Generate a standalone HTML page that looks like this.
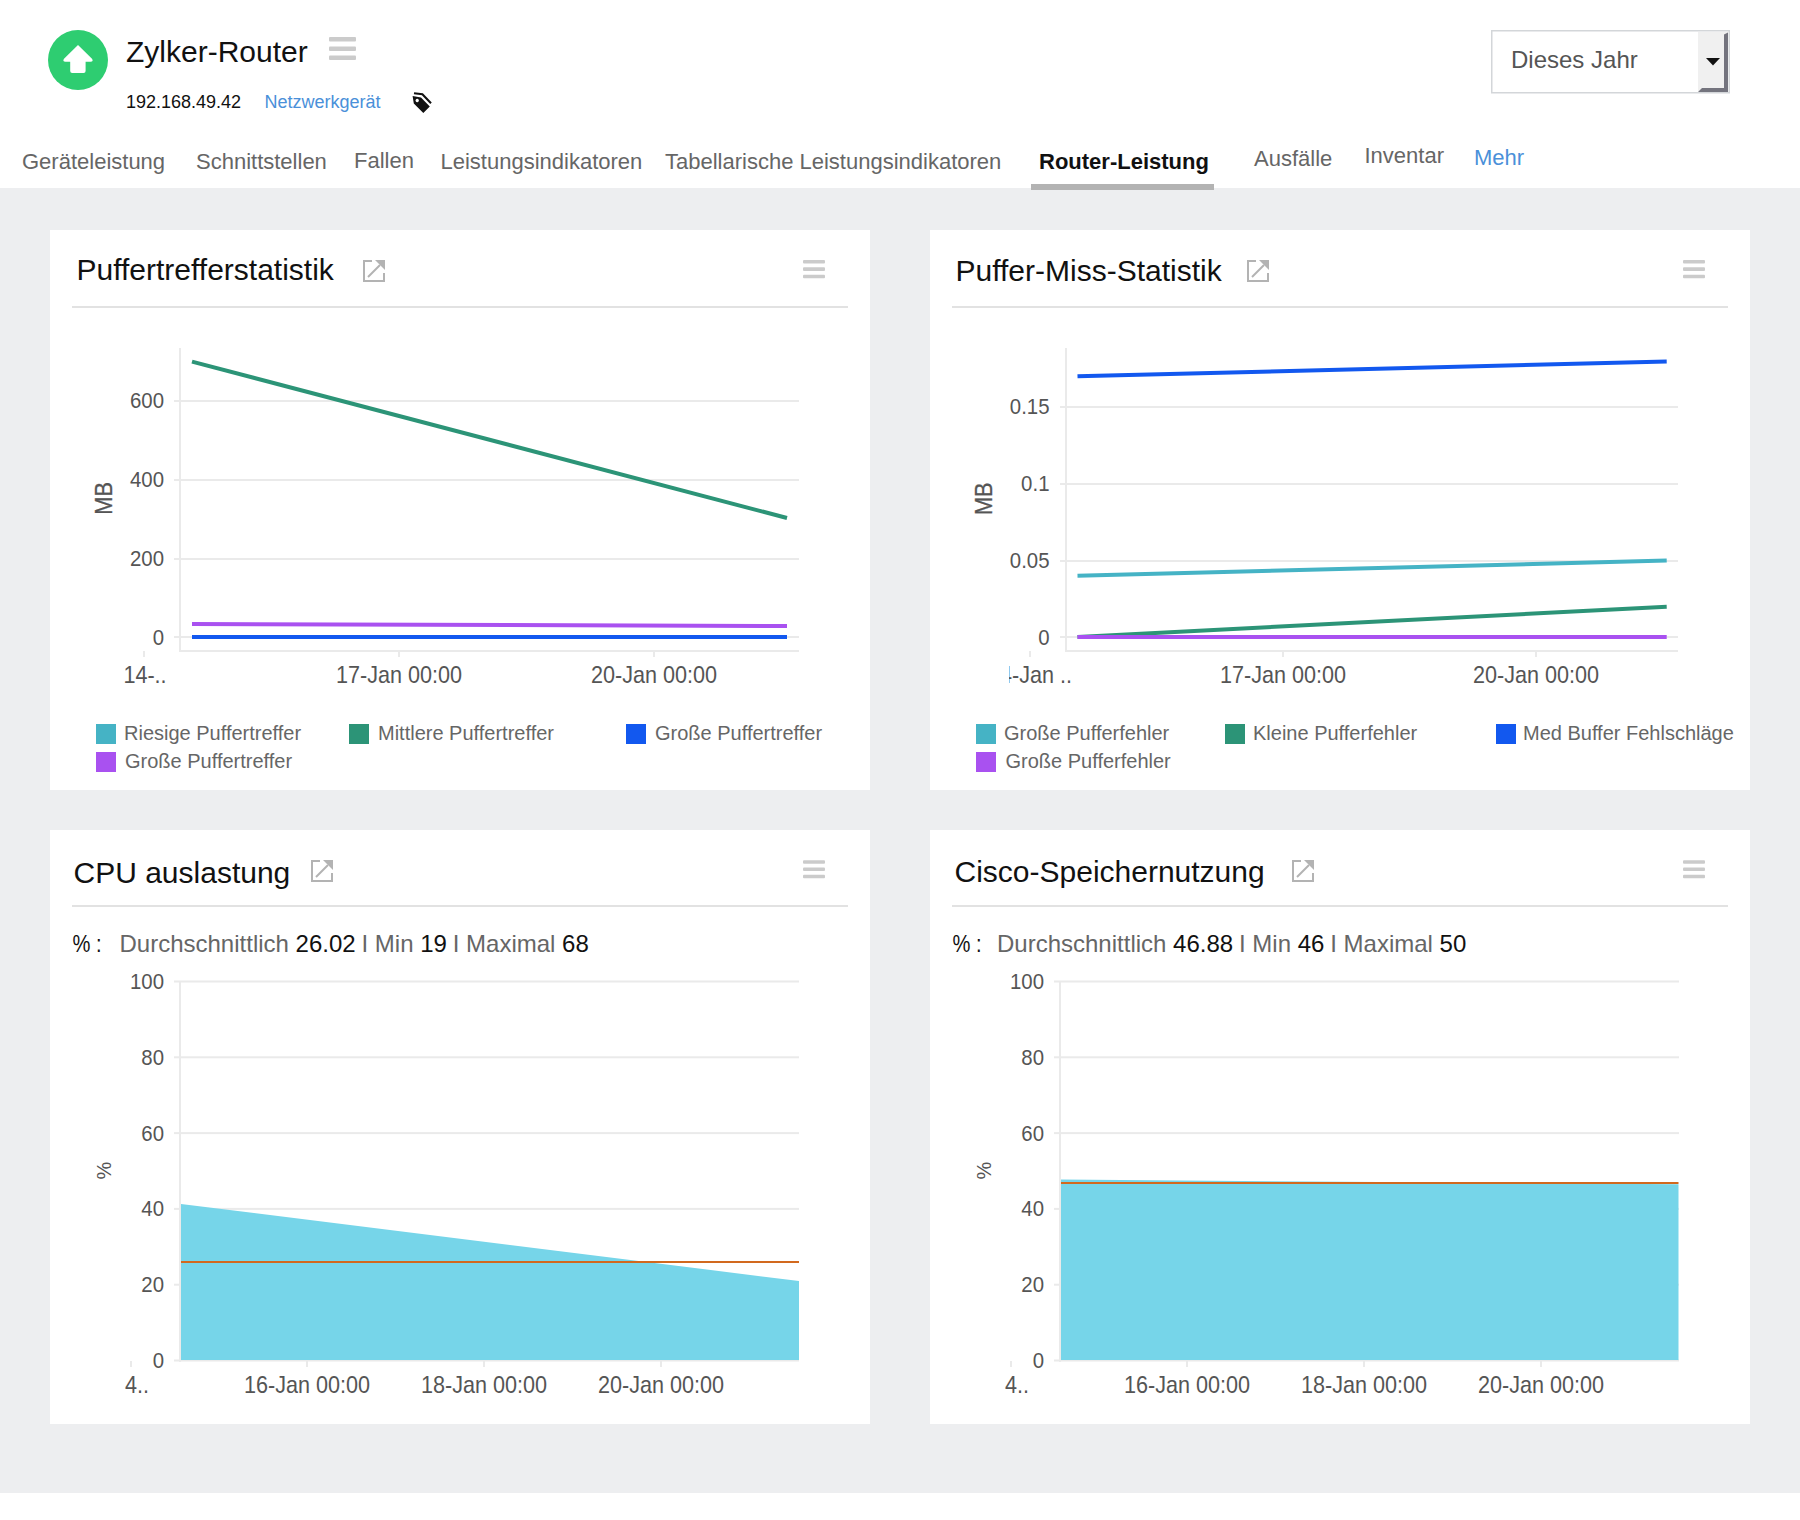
<!DOCTYPE html>
<html><head><meta charset="utf-8">
<style>
html,body{margin:0;padding:0;background:#fff;}
body{width:1800px;height:1520px;overflow:hidden;position:relative;font-family:"Liberation Sans",sans-serif;}
svg{position:absolute;left:0;top:0;}
text{font-family:"Liberation Sans",sans-serif;}
</style></head>
<body>
<svg width="1800" height="1520" viewBox="0 0 1800 1520">
<!-- header -->
<rect x="0" y="0" width="1800" height="188" fill="#fff"/>
<rect x="0" y="188" width="1800" height="1305" fill="#edeef0"/>

<circle cx="78" cy="60" r="30" fill="#2ecd71"/>
<path d="M78 45 L92 58.8 Q93.8 61.8 90.5 61.8 L85.6 61.8 L85.6 71 Q85.6 73 83.6 73 L72.2 73 Q70.2 73 70.2 71 L70.2 61.8 L65.5 61.8 Q62.2 61.8 64 58.8 Z" fill="#fff"/>

<text x="126" y="62" font-size="30" fill="#111">Zylker-Router</text>
<g fill="#cbcbcb">
<rect x="329" y="37" width="27" height="4.5" rx="1"/>
<rect x="329" y="46.5" width="27" height="4.5" rx="1"/>
<rect x="329" y="55.5" width="27" height="4.5" rx="1"/>
</g>
<text x="126" y="108" font-size="18" fill="#111">192.168.49.42</text>
<text x="264.5" y="108" font-size="18" fill="#4a90d9">Netzwerkgerät</text>
<!-- tag icon -->
<path d="M412.6 96.1 L421 97.4 L429.8 106.4 L423.3 112.9 L413.8 103.5 Z M417.2 98.8 A1.7 1.7 0 1 0 417.21 98.8 Z" fill="#111" fill-rule="evenodd"/>
<path d="M414 93.3 L422.4 94.3 L431 103.2" fill="none" stroke="#111" stroke-width="2.1"/>
<!-- dropdown -->
<rect x="1491.75" y="30.75" width="237.5" height="62" fill="#fff" stroke="#d3d6d9" stroke-width="1.5"/>
<rect x="1698" y="32" width="30" height="59" fill="#f0f0f0"/>
<path d="M1724 34.5 L1728 32.5 L1728 92 L1698 92 L1702 88 L1724 88 Z" fill="#74747e"/>
<path d="M1706 58 L1720 58 L1713 65.5 Z" fill="#111"/>
<text x="1511" y="68" font-size="24" fill="#555">Dieses Jahr</text>

<!-- tabs -->
<g font-size="22" fill="#666">
<text x="22" y="169">Geräteleistung</text>
<text x="196" y="169">Schnittstellen</text>
<text x="354" y="168">Fallen</text>
<text x="440.5" y="169">Leistungsindikatoren</text>
<text x="665" y="169">Tabellarische Leistungsindikatoren</text>
<text x="1254" y="166">Ausfälle</text>
<text x="1364.5" y="162.5">Inventar</text>
<text x="1474" y="165" fill="#4a90d9">Mehr</text>
</g>
<text x="1039" y="169" font-size="22" font-weight="bold" fill="#111">Router-Leistung</text>
<rect x="1031" y="184" width="183" height="6" fill="#b3b3b3"/>

<!-- cards -->
<rect x="50" y="230" width="820" height="560" fill="#fff"/>
<rect x="930" y="230" width="820" height="560" fill="#fff"/>
<rect x="50" y="830" width="820" height="594" fill="#fff"/>
<rect x="930" y="830" width="820" height="594" fill="#fff"/>

<!-- CARD1_START -->
<text x="76.5" y="280" font-size="30" fill="#111">Puffertrefferstatistik</text>
<g id="exp1" fill="none" stroke="#b3b3b3" stroke-width="2">
<path d="M372 261 L364 261 L364 281 L384 281 L384 273"/>
<path d="M368 277 L380 265"/>
<path d="M375 260 L385 260 L385 270 Z" fill="#b3b3b3" stroke="none"/>
</g>
<g fill="#cbcbcb">
<rect x="803" y="260" width="22" height="3.6" rx="1"/>
<rect x="803" y="267.3" width="22" height="3.6" rx="1"/>
<rect x="803" y="274.7" width="22" height="3.6" rx="1"/>
</g>
<rect x="72" y="306" width="776" height="2" fill="#e2e2e2"/>
<!-- chart1 -->
<g fill="#eaeaea">
<rect x="174" y="400" width="625" height="2"/>
<rect x="174" y="479" width="625" height="2"/>
<rect x="174" y="558" width="625" height="2"/>
<rect x="174" y="636" width="625" height="2"/>
<rect x="179" y="348" width="2" height="304"/>
<rect x="179" y="650" width="620" height="2"/>
<rect x="143" y="651" width="2" height="6"/>
<rect x="398" y="651" width="2" height="6"/>
<rect x="653" y="651" width="2" height="6"/>
</g>
<text transform="translate(112.2,498.3) rotate(-90) scale(0.95,1)" font-size="23" fill="#555" stroke="#555" stroke-width="0.3" text-anchor="middle">MB</text>
<g fill="none" stroke-width="4" stroke-linecap="butt">
<path d="M192 637 L787 637" stroke="#45b3c5"/>
<path d="M192 361.6 L787 518" stroke="#2c9477"/>
<path d="M192 624 L787 626" stroke="#a951f0"/>
<path d="M192 637 L787 637" stroke="#1258ef"/>
</g>
<g>
<rect x="96" y="724" width="20" height="20" fill="#45b3c5"/>
<rect x="349" y="724" width="20" height="20" fill="#2c9477"/>
<rect x="626" y="724" width="20" height="20" fill="#1258ef"/>
<rect x="96" y="752" width="20" height="20" fill="#a951f0"/>
</g>
<g font-size="20" fill="#666">
<text x="124" y="740">Riesige Puffertreffer</text>
<text x="378" y="740">Mittlere Puffertreffer</text>
<text x="655" y="740">Große Puffertreffer</text>
<text x="125" y="768">Große Puffertreffer</text>
</g>
<g font-size="24" fill="#555" text-anchor="middle">
<text transform="translate(145,683) scale(0.9,1)">14-..</text>
<text transform="translate(399,683) scale(0.9,1)">17-Jan 00:00</text>
<text transform="translate(654,683) scale(0.9,1)">20-Jan 00:00</text>
</g>
<g font-size="21.5" fill="#555" text-anchor="end">
<text transform="translate(164,408) scale(0.95,1)">600</text>
<text transform="translate(164,487) scale(0.95,1)">400</text>
<text transform="translate(164,566) scale(0.95,1)">200</text>
<text transform="translate(164,644.5) scale(0.95,1)">0</text>
</g>
<!-- CARD1_END -->
<!-- CARD2_START -->
<text x="955.5" y="281" font-size="30" fill="#111">Puffer-Miss-Statistik</text>
<g fill="none" stroke="#b3b3b3" stroke-width="2">
<path d="M1256 261 L1248 261 L1248 281 L1268 281 L1268 273"/>
<path d="M1252 277 L1264 265"/>
<path d="M1259 260 L1269 260 L1269 270 Z" fill="#b3b3b3" stroke="none"/>
</g>
<g fill="#cbcbcb">
<rect x="1683" y="260" width="22" height="3.6" rx="1"/>
<rect x="1683" y="267.3" width="22" height="3.6" rx="1"/>
<rect x="1683" y="274.7" width="22" height="3.6" rx="1"/>
</g>
<rect x="952" y="306" width="776" height="2" fill="#e2e2e2"/>
<g fill="#eaeaea">
<rect x="1060" y="406" width="618" height="2"/>
<rect x="1060" y="483" width="618" height="2"/>
<rect x="1060" y="560" width="618" height="2"/>
<rect x="1060" y="636" width="618" height="2"/>
<rect x="1065" y="348" width="2" height="304"/>
<rect x="1065" y="650" width="613" height="2"/>
<rect x="1029" y="651" width="2" height="6"/>
<rect x="1282" y="651" width="2" height="6"/>
<rect x="1535" y="651" width="2" height="6"/>
</g>
<svg x="1009" y="655" width="800" height="40" overflow="hidden">
<text transform="translate(21,28) scale(0.9,1)" font-size="24" fill="#555" text-anchor="middle">14-Jan ..</text>
</svg>
<text transform="translate(992,498.7) rotate(-90) scale(0.95,1)" font-size="23" fill="#555" stroke="#555" stroke-width="0.3" text-anchor="middle">MB</text>
<g fill="none" stroke-width="4">
<path d="M1077.5 376.3 L1666.7 361.4" stroke="#1258ef"/>
<path d="M1077.5 575.8 L1666.7 560.6" stroke="#45b3c5"/>
<path d="M1077.5 637 L1666.7 606.7" stroke="#2c9477"/>
<path d="M1077.5 637 L1666.7 637" stroke="#a951f0"/>
</g>
<g>
<rect x="976" y="724" width="20" height="20" fill="#45b3c5"/>
<rect x="1225" y="724" width="20" height="20" fill="#2c9477"/>
<rect x="1496" y="724" width="20" height="20" fill="#1258ef"/>
<rect x="976" y="752" width="20" height="20" fill="#a951f0"/>
</g>
<g font-size="20" fill="#666">
<text x="1004" y="740">Große Pufferfehler</text>
<text x="1253" y="740">Kleine Pufferfehler</text>
<text x="1523" y="740">Med Buffer Fehlschläge</text>
<text x="1005.5" y="768">Große Pufferfehler</text>
</g>
<g font-size="24" fill="#555" text-anchor="middle">
<text transform="translate(1283,683) scale(0.9,1)">17-Jan 00:00</text>
<text transform="translate(1536,683) scale(0.9,1)">20-Jan 00:00</text>
</g>
<g font-size="21.5" fill="#555" text-anchor="end">
<text transform="translate(1049.5,414) scale(0.95,1)">0.15</text>
<text transform="translate(1049.5,491) scale(0.95,1)">0.1</text>
<text transform="translate(1049.5,568) scale(0.95,1)">0.05</text>
<text transform="translate(1049.5,644.5) scale(0.95,1)">0</text>
</g>
<!-- CARD2_END -->
<!-- CARD3_START -->
<text x="73.5" y="883" font-size="30" fill="#111">CPU auslastung</text>
<g fill="none" stroke="#b3b3b3" stroke-width="2">
<path d="M320 861 L312 861 L312 881 L332 881 L332 873"/>
<path d="M316 877 L328 865"/>
<path d="M323 860 L333 860 L333 870 Z" fill="#b3b3b3" stroke="none"/>
</g>
<g fill="#cbcbcb">
<rect x="803" y="860.2" width="22" height="3.6" rx="1"/>
<rect x="803" y="867.4" width="22" height="3.6" rx="1"/>
<rect x="803" y="874.7" width="22" height="3.6" rx="1"/>
</g>
<rect x="72" y="905" width="776" height="2" fill="#e2e2e2"/>
<text transform="translate(72.5,952) scale(0.84,1)" font-size="24" fill="#111">% :</text>
<text x="119.5" y="952" font-size="24" fill="#666">Durchschnittlich <tspan fill="#111">26.02</tspan><tspan dx="-0.8"> I </tspan>Min <tspan fill="#111">19</tspan><tspan dx="-0.8"> I </tspan>Maximal <tspan fill="#111">68</tspan></text>
<g fill="#eaeaea">
<rect x="174" y="980.5" width="625" height="2"/>
<rect x="174" y="1056.3" width="625" height="2"/>
<rect x="174" y="1132.1" width="625" height="2"/>
<rect x="174" y="1207.9" width="625" height="2"/>
<rect x="174" y="1283.7" width="625" height="2"/>
<rect x="174" y="1359.5" width="625" height="2"/>
<rect x="179" y="981" width="2" height="381"/>
<rect x="130" y="1361" width="2" height="6"/>
<rect x="306" y="1361" width="2" height="6"/>
<rect x="483" y="1361" width="2" height="6"/>
<rect x="660" y="1361" width="2" height="6"/>
</g>
<path d="M181 1204 L799 1281 L799 1360 L181 1360 Z" fill="#76d5e9"/>
<rect x="181" y="1261" width="618" height="2" fill="#d2691e"/>
<text transform="translate(111,1170.7) rotate(-90)" font-size="20" fill="#555" text-anchor="middle">%</text>
<g font-size="24" fill="#555" text-anchor="middle">
<text transform="translate(137,1393) scale(0.9,1)">4..</text>
<text transform="translate(307,1393) scale(0.9,1)">16-Jan 00:00</text>
<text transform="translate(484,1393) scale(0.9,1)">18-Jan 00:00</text>
<text transform="translate(661,1393) scale(0.9,1)">20-Jan 00:00</text>
</g>
<g font-size="21.5" fill="#555" text-anchor="end">
<text transform="translate(164,989) scale(0.95,1)">100</text>
<text transform="translate(164,1064.8) scale(0.95,1)">80</text>
<text transform="translate(164,1140.6) scale(0.95,1)">60</text>
<text transform="translate(164,1216.4) scale(0.95,1)">40</text>
<text transform="translate(164,1292.2) scale(0.95,1)">20</text>
<text transform="translate(164,1368) scale(0.95,1)">0</text>
</g>
<!-- CARD3_END -->
<!-- CARD4_START -->
<text x="954.5" y="882" font-size="30" fill="#111">Cisco-Speichernutzung</text>
<g fill="none" stroke="#b3b3b3" stroke-width="2">
<path d="M1301 861 L1293 861 L1293 881 L1313 881 L1313 873"/>
<path d="M1297 877 L1309 865"/>
<path d="M1304 860 L1314 860 L1314 870 Z" fill="#b3b3b3" stroke="none"/>
</g>
<g fill="#cbcbcb">
<rect x="1683" y="860.2" width="22" height="3.6" rx="1"/>
<rect x="1683" y="867.4" width="22" height="3.6" rx="1"/>
<rect x="1683" y="874.7" width="22" height="3.6" rx="1"/>
</g>
<rect x="952" y="905" width="776" height="2" fill="#e2e2e2"/>
<text transform="translate(952.5,952) scale(0.84,1)" font-size="24" fill="#111">% :</text>
<text x="997" y="952" font-size="24" fill="#666">Durchschnittlich <tspan fill="#111">46.88</tspan><tspan dx="-0.8"> I </tspan>Min <tspan fill="#111">46</tspan><tspan dx="-0.8"> I </tspan>Maximal <tspan fill="#111">50</tspan></text>
<g fill="#eaeaea">
<rect x="1054" y="980.5" width="625" height="2"/>
<rect x="1054" y="1056.3" width="625" height="2"/>
<rect x="1054" y="1132.1" width="625" height="2"/>
<rect x="1054" y="1207.9" width="625" height="2"/>
<rect x="1054" y="1283.7" width="625" height="2"/>
<rect x="1054" y="1359.5" width="625" height="2"/>
<rect x="1059" y="981" width="2" height="381"/>
<rect x="1010" y="1361" width="2" height="6"/>
<rect x="1186" y="1361" width="2" height="6"/>
<rect x="1363" y="1361" width="2" height="6"/>
<rect x="1540" y="1361" width="2" height="6"/>
</g>
<path d="M1061 1179.6 L1678.5 1184.2 L1678.5 1360 L1061 1360 Z" fill="#76d5e9"/>
<rect x="1061" y="1182" width="617.5" height="2" fill="#d2691e"/>
<text transform="translate(991,1170.7) rotate(-90)" font-size="20" fill="#555" text-anchor="middle">%</text>
<g font-size="24" fill="#555" text-anchor="middle">
<text transform="translate(1017,1393) scale(0.9,1)">4..</text>
<text transform="translate(1187,1393) scale(0.9,1)">16-Jan 00:00</text>
<text transform="translate(1364,1393) scale(0.9,1)">18-Jan 00:00</text>
<text transform="translate(1541,1393) scale(0.9,1)">20-Jan 00:00</text>
</g>
<g font-size="21.5" fill="#555" text-anchor="end">
<text transform="translate(1044,989) scale(0.95,1)">100</text>
<text transform="translate(1044,1064.8) scale(0.95,1)">80</text>
<text transform="translate(1044,1140.6) scale(0.95,1)">60</text>
<text transform="translate(1044,1216.4) scale(0.95,1)">40</text>
<text transform="translate(1044,1292.2) scale(0.95,1)">20</text>
<text transform="translate(1044,1368) scale(0.95,1)">0</text>
</g>
<!-- CARD4_END -->
</svg>
</body></html>
